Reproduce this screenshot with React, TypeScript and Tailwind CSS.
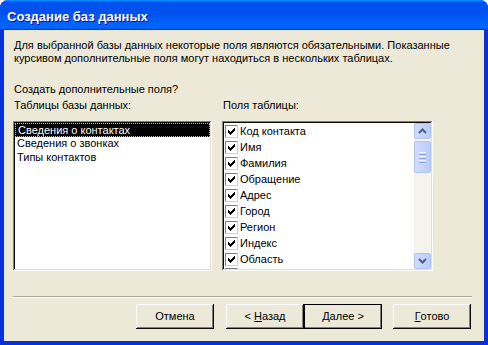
import React from "react";

const font = "font-['Liberation_Sans',Arial,sans-serif]";

const tables = ["Сведения о контактах", "Сведения о звонках", "Типы контактов"];

const fields = [
  "Код контакта",
  "Имя",
  "Фамилия",
  "Обращение",
  "Адрес",
  "Город",
  "Регион",
  "Индекс",
  "Область",
];

const sunken =
  "shadow-[inset_-1px_-1px_#ffffff,inset_1px_1px_#808080,inset_-2px_-2px_#dfdfdf,inset_2px_2px_#0a0a0a]";

const raised =
  "shadow-[inset_-1px_-1px_#0a0a0a,inset_1px_1px_#ffffff,inset_-2px_-2px_#808080,inset_2px_2px_#ece9d8]";

function CheckBox() {
  return (
    <span className="flex h-[13px] w-[13px] shrink-0 items-center justify-center border border-t-[#808080] border-l-[#808080] border-r-[#d4d0c8] border-b-[#d4d0c8] bg-white">
      <svg width="7" height="7" viewBox="0 0 7 7" shapeRendering="crispEdges">
        <path d="M6 0h1v3h-1zM5 1h1v3h-1zM4 2h1v3h-1zM3 3h1v3h-1zM2 4h1v3h-1zM1 3h1v3h-1zM0 2h1v3h-1z" fill="#000" />
      </svg>
    </span>
  );
}

function ScrollButton({ up }: { up?: boolean }) {
  return (
    <div className="flex h-[16px] w-full items-center justify-center rounded-[2px] border border-[#b0c4f2] bg-[linear-gradient(to_right,#d0dcfd,#b9ccf7)]">
      <svg width="9" height="6" viewBox="0 0 9 6">
        <path
          d={up ? "M1 5 L4.5 1.5 L8 5" : "M1 1 L4.5 4.5 L8 1"}
          fill="none"
          stroke="#4d6185"
          strokeWidth="2"
        />
      </svg>
    </div>
  );
}

function Button({
  children,
  primary,
}: {
  children: React.ReactNode;
  primary?: boolean;
}) {
  return (
    <div
      className={`flex h-[25px] w-[78px] items-center justify-center bg-[#ece9d8] text-[11px] text-black ${raised} ${
        primary ? "outline outline-1 outline-black -outline-offset-1" : ""
      }`}
    >
      {children}
    </div>
  );
}

export default function App() {
  return (
    <div className={`flex h-[345px] w-[488px] flex-col overflow-hidden rounded-t-[8px] bg-[#0831d9] ${font}`}>
      <div className="flex h-[30px] shrink-0 items-center bg-[linear-gradient(to_bottom,#0997ff,#0053ee_8%,#0050ee_40%,#0066ff_88%,#0066ff_93%,#005bff_95%,#003dd7_96%,#003dd7)] px-[7px] pt-[3px] text-[13px] font-bold text-white [text-shadow:1px_1px_#0f1089]">
        Создание баз данных
      </div>
      <div className="flex flex-1 flex-col px-[4px] pb-[4px]">
        <div className="flex flex-1 flex-col bg-[#ece9d8] pl-[9px] pr-[12px] pt-[9px] text-[11px] leading-[13px] text-black">
          <p className="pl-px">
            Для выбранной базы данных некоторые поля являются обязательными. Показанные
            <br />
            курсивом дополнительные поля могут находиться в нескольких таблицах.
          </p>
          <p className="mt-[18px] pl-px">Создать дополнительные поля?</p>

          <div className="mt-[3px] flex gap-[10px]">
            <div className="flex w-[199px] flex-col">
              <span className="pl-px">Таблицы базы данных:</span>
              <div className={`mt-[9px] flex h-[150px] flex-col bg-white p-[2px] ${sunken}`}>
                {tables.map((t, i) => (
                  <div
                    key={t}
                    className={`h-[14px] pl-[2px] leading-[13px] ${
                      i === 0 ? "border border-dotted border-[#c0c0c0] bg-black pl-[1px] text-white" : ""
                    }`}
                  >
                    {t}
                  </div>
                ))}
              </div>
            </div>

            <div className="flex w-[211px] flex-col">
              <span className="pl-px">Поля таблицы:</span>
              <div className={`mt-[9px] flex h-[150px] bg-white p-[2px] ${sunken}`}>
                <div className="flex flex-1 flex-col overflow-hidden">
                  {fields.map((f) => (
                    <div key={f} className="flex h-[16px] shrink-0 items-center gap-[2px] pl-px">
                      <CheckBox />
                      <span>{f}</span>
                    </div>
                  ))}
                  {/* next row, only the top of its checkbox shows */}
                  <div className="flex h-[16px] shrink-0 items-start pl-px pt-px">
                    <CheckBox />
                  </div>
                </div>
                <div className="flex w-[17px] shrink-0 flex-col bg-[#f4f3ee]">
                  <ScrollButton up />
                  <div className="mt-[2px] flex h-[32px] flex-col items-center justify-center gap-[1px] rounded-[2px] border border-[#b0c4f2] bg-[linear-gradient(to_right,#d0dcfd,#b9ccf7)]">
                    <span className="h-px w-[7px] bg-[#eef3fe]" />
                    <span className="h-px w-[7px] bg-[#8ca6e6]" />
                    <span className="h-px w-[7px] bg-[#eef3fe]" />
                    <span className="h-px w-[7px] bg-[#8ca6e6]" />
                    <span className="h-px w-[7px] bg-[#eef3fe]" />
                    <span className="h-px w-[7px] bg-[#8ca6e6]" />
                  </div>
                  <div className="flex-1" />
                  <ScrollButton />
                </div>
              </div>
            </div>
          </div>

          <div className="mt-[25px] h-[2px] border-t border-t-[#aca899] border-b border-b-white" />

          <div className="mt-[6px] flex justify-end pr-px">
            <Button>Отмена</Button>
            <div className="ml-[12px] flex">
              <Button>
                &lt;&nbsp;<u>Н</u>азад
              </Button>
              <Button primary>
                <u>Д</u>алее &gt;
              </Button>
            </div>
            <div className="ml-[11px]">
              <Button>
                <u>Г</u>отово
              </Button>
            </div>
          </div>
        </div>
      </div>
    </div>
  );
}
